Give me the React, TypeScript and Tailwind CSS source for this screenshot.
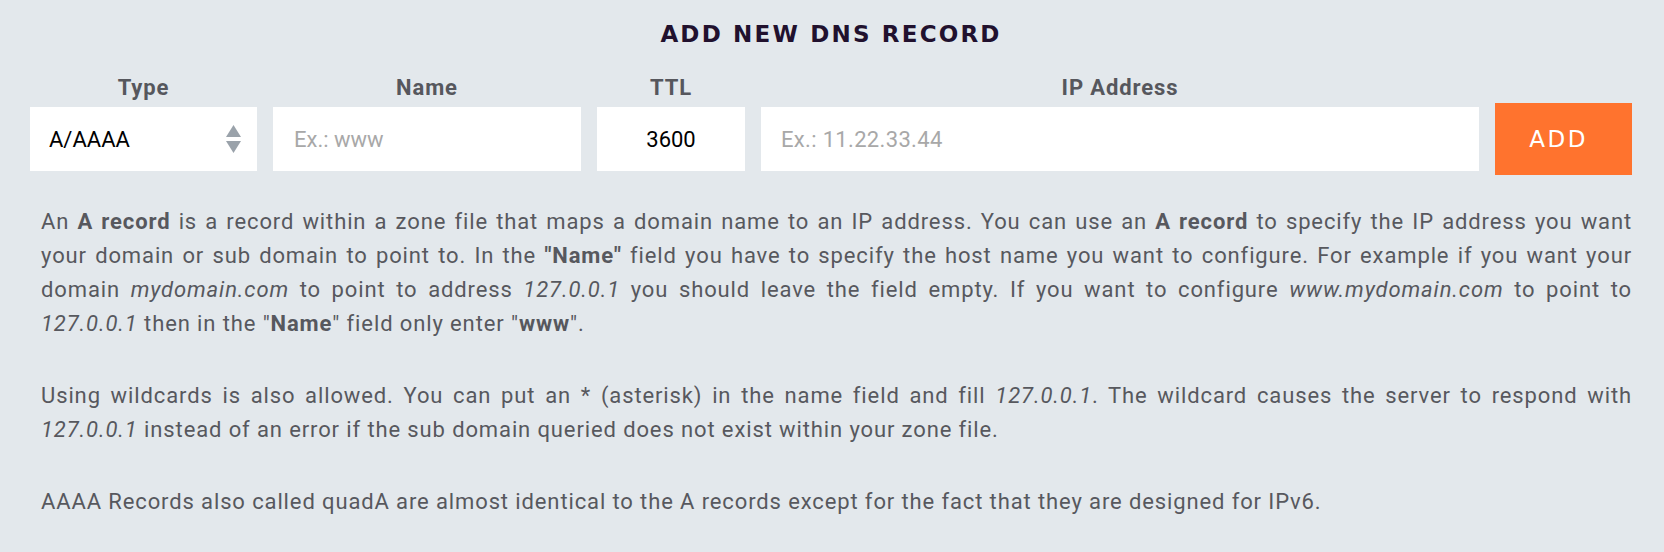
import React from "react";

const J = ({ children }: { children: React.ReactNode }) => (
  <span className="block text-justify [text-align-last:justify]">{children}</span>
);
const L = ({ children }: { children: React.ReactNode }) => <span className="block text-left">{children}</span>;

export default function App() {
  return (
    <div className="min-h-[552px] w-full bg-[#e3e8ec] px-[30px] pr-[32px]" style={{ fontFamily: "Roboto, 'Liberation Sans', sans-serif" }}>
      <h1
        className="pt-[20px] text-center text-[23px] font-bold uppercase leading-[28px] tracking-[0.095em] text-[#21112e]"
        style={{ fontFamily: "'DejaVu Sans', Lato, sans-serif" }}
      >
        Add new DNS record
      </h1>

      <div className="mt-[27px] grid grid-cols-[227px_308px_148px_1fr_137px] items-center gap-x-[16px] gap-y-[2px]">
        <div className="text-center text-[22px] font-bold leading-[26px] tracking-[0.04em] text-[#56575d]">Type</div>
        <div className="text-center text-[22px] font-bold leading-[26px] tracking-[0.04em] text-[#56575d]">Name</div>
        <div className="text-center text-[22px] font-bold leading-[26px] tracking-[0.04em] text-[#56575d]">TTL</div>
        <div className="text-center text-[22px] font-bold leading-[26px] tracking-[0.04em] text-[#56575d]">IP Address</div>
        <div />

        <div className="relative h-[64px] bg-white">
          <select className="h-full w-full appearance-none bg-transparent pl-[19px] text-[22px] text-black outline-none">
            <option>A/AAAA</option>
          </select>
          <svg className="pointer-events-none absolute right-[16px] top-[18px]" width="15" height="28" viewBox="0 0 15 28">
            <path d="M7.5 0 L15 12 L0 12 Z" fill="#9aa2aa" />
            <path d="M0 16 L15 16 L7.5 28 Z" fill="#9aa2aa" />
          </svg>
        </div>
        <input
          className="h-[64px] w-full bg-white px-[21px] text-[22px] text-black outline-none placeholder:text-[#a8a8a8]"
          placeholder="Ex.: www"
        />
        <input
          className="h-[64px] w-full bg-white px-[10px] text-center text-[22px] text-black outline-none"
          defaultValue="3600"
        />
        <input
          className="h-[64px] w-full bg-white px-[20px] text-[22px] tracking-[0.015em] text-black outline-none placeholder:text-[#a8a8a8]"
          placeholder="Ex.: 11.22.33.44"
        />
        <button
          className="h-[72px] bg-[#ff732e] pr-[10px] text-[23px] font-normal uppercase tracking-[0.11em] text-white"
          style={{ fontFamily: "'DejaVu Sans', Inter, sans-serif" }}
        >
          Add
        </button>
      </div>

      <div className="mt-[30px] pl-[11px] text-[22px] leading-[34px] tracking-[0.04em] text-[#57585e]">
        <p className="mb-[38px]">
          <J>
            An <b>A record</b> is a record within a zone file that maps a domain name to an IP address. You can use an{" "}
            <b>A record</b> to specify the IP address you want
          </J>
          <J>
            your domain or sub domain to point to. In the <b>"Name"</b> field you have to specify the host name you want
            to configure. For example if you want your
          </J>
          <J>
            domain <i>mydomain.com</i> to point to address <i>127.0.0.1</i> you should leave the field empty. If you want
            to configure <i>www.mydomain.com</i> to point to
          </J>
          <L>
            <i>127.0.0.1</i> then in the "<b>Name</b>" field only enter "<b>www</b>".
          </L>
        </p>
        <p className="mb-[38px]">
          <J>
            Using wildcards is also allowed. You can put an * (asterisk) in the name field and fill <i>127.0.0.1</i>. The
            wildcard causes the server to respond with
          </J>
          <L>
            <i>127.0.0.1</i> instead of an error if the sub domain queried does not exist within your zone file.
          </L>
        </p>
        <p>
          <L>
            AAAA Records also called quadA are almost identical to the A records except for the fact that they are
            designed for IPv6.
          </L>
        </p>
      </div>
    </div>
  );
}
